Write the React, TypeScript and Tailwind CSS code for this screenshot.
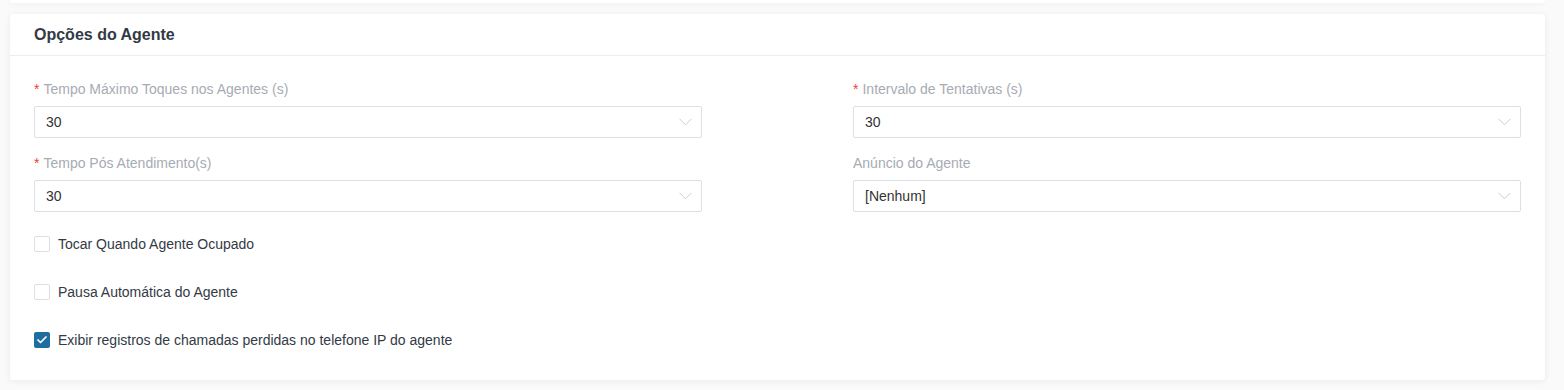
import { Check } from 'lucide-react';

const font = { fontFamily: '"Liberation Sans", Arial, sans-serif' };

function Chevron() {
  return (
    <svg width="13" height="8" viewBox="0 0 13 8" fill="none" className="text-[#c8ccd2]">
      <polyline points="0.5,0.8 6.5,6.8 12.5,0.8" stroke="currentColor" strokeWidth="1" />
    </svg>
  );
}

function Field({ label, value, required }: { label: string; value: string; required?: boolean }) {
  return (
    <div className="flex flex-col">
      <label className="mb-[9px] flex h-[16px] items-center text-[14px] leading-[16px] text-[#a7abb3]">
        {required && <span className="mr-[4px] text-[#f04134]">*</span>}
        {label}
      </label>
      <div className="flex h-[32px] items-center justify-between rounded-[2px] border border-[#dcdfe6] bg-white pl-[11px] pr-[9px]">
        <span className="text-[14px] text-[#333]">{value}</span>
        <Chevron />
      </div>
    </div>
  );
}

function CheckRow({ label, checked }: { label: string; checked?: boolean }) {
  return (
    <div className="flex h-[16px] items-center">
      <span
        className={
          checked
            ? 'flex h-[16px] w-[16px] items-center justify-center rounded-[2px] bg-[#1f6ea0]'
            : 'h-[16px] w-[16px] rounded-[2px] border border-[#dcdfe6] bg-white'
        }
      >
        {checked && <Check size={12} strokeWidth={3.5} className="text-white" />}
      </span>
      <span className="ml-[8px] text-[14px] text-[#333a45]">{label}</span>
    </div>
  );
}

export default function App() {
  return (
    <div className="h-[390px] w-full bg-[#fafafa] px-[10px]" style={font}>
      <div className="h-[3px] w-[1535px] rounded-b-[3px] bg-white shadow-[0_1px_6px_rgba(0,0,0,0.06)]" />
      <div className="mt-[11px] w-[1535px] rounded-[3px] bg-white shadow-[0_1px_6px_rgba(0,0,0,0.07)]">
        <div className="flex h-[42px] items-center border-b border-[#eeeeee] px-[24px] pt-[1px]">
          <h2 className="text-[16px] font-bold text-[#323a46]">Opções do Agente</h2>
        </div>
        <div className="px-[24px] pt-[25px] pb-[32px]">
          <div className="grid grid-cols-2 gap-x-[151px] gap-y-[17px]">
            <Field label="Tempo Máximo Toques nos Agentes (s)" value="30" required />
            <Field label="Intervalo de Tentativas (s)" value="30" required />
            <Field label="Tempo Pós Atendimento(s)" value="30" required />
            <Field label="Anúncio do Agente" value="[Nenhum]" />
          </div>
          <div className="mt-[24px] flex flex-col gap-[32px]">
            <CheckRow label="Tocar Quando Agente Ocupado" />
            <CheckRow label="Pausa Automática do Agente" />
            <CheckRow label="Exibir registros de chamadas perdidas no telefone IP do agente" checked />
          </div>
        </div>
      </div>
    </div>
  );
}
